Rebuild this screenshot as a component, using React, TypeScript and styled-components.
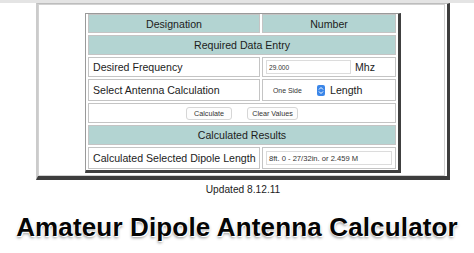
import styled, { createGlobalStyle } from "styled-components";

const Global = createGlobalStyle`
  html, body {
    margin: 0;
    padding: 0;
    background: #ffffff;
    font-family: "Liberation Sans", Arial, sans-serif;
    color: #1c1c1c;
  }
`;

const Page = styled.div`
  width: 474px;
  height: 253px;
  overflow: hidden;
  display: flex;
  flex-direction: column;
`;

const TopBand = styled.div`
  height: 3px;
  background: #e4e4e4;
`;

// outer table with the old 3d border
const Frame = styled.div`
  margin-left: 36px;
  width: 414px;
  box-sizing: border-box;
  border-left: 2px solid #cbcbcb;
  border-top: 1px solid #bdbdbd;
  border-right: 3px solid #3d3d3d;
  border-bottom: 4px solid #3d3d3d;
`;

const FrameCell = styled.div`
  margin-right: 2px;
  border: 1px solid #d2d2d2;
  padding: 8px 0 2px 46px;
`;

const Table = styled.div`
  width: 316px;
  box-sizing: border-box;
  border-left: 1px solid #9a9a9a;
  border-top: 1px solid #9a9a9a;
  border-right: 3px solid #404040;
  border-bottom: 3px solid #404040;
  padding: 0 2px 1px 2px;
  display: grid;
  grid-template-columns: 172px 134px;
  grid-template-rows: 19px 20px 20px 22px 20px 20px 22px;
  gap: 2px;
`;

const Cell = styled.div<{ $head?: boolean; $span?: boolean; $center?: boolean }>`
  grid-column: ${(p) => (p.$span ? "1 / 3" : "auto")};
  box-sizing: border-box;
  border: 1px solid #c4c4c4;
  background: ${(p) => (p.$head ? "#b3d4d2" : "#ffffff")};
  display: flex;
  align-items: center;
  justify-content: ${(p) => (p.$center ? "center" : "flex-start")};
  padding: 0 4px;
  font-size: 10.6px;
  white-space: nowrap;
`;

const ValueCell = styled(Cell)`
  padding: 0 3px;
  gap: 4px;
`;

const Input = styled.div<{ $w: number; $fs?: number }>`
  width: ${(p) => p.$w}px;
  height: 14px;
  box-sizing: border-box;
  border: 1px solid #dcdcdc;
  display: flex;
  align-items: center;
  padding-left: 2px;
  font-size: ${(p) => p.$fs ?? 6.6}px;
  color: #333;
`;

const Unit = styled.span`
  font-size: 10.6px;
`;

const Select = styled.div`
  display: flex;
  align-items: center;
  width: 59px;
  height: 12px;
  font-size: 6.9px;
  color: #333;
  padding-left: 7px;
  box-sizing: border-box;
  justify-content: space-between;
  margin-right: 1px;
`;

const Stepper = styled.span`
  width: 8px;
  height: 11px;
  border-radius: 2px;
  background: #3b86e8;
  display: flex;
  align-items: center;
  justify-content: center;
`;

const Buttons = styled.div`
  display: flex;
  gap: 15px;
`;

const Button = styled.div<{ $w: number }>`
  width: ${(p) => p.$w}px;
  height: 13px;
  box-sizing: border-box;
  border: 1px solid #d6d6d6;
  border-radius: 3px;
  background: #fdfdfd;
  font-size: 7.2px;
  color: #333;
  display: flex;
  align-items: center;
  justify-content: center;
`;

const Updated = styled.div`
  text-align: center;
  font-size: 10.2px;
  margin-top: 4px;
  padding-left: 12px;
`;

const Title = styled.h1`
  margin: 17px 0 0 0;
  text-align: center;
  font-size: 26px;
  letter-spacing: 0.15px;
  line-height: 30px;
  font-weight: bold;
  color: #050505;
  text-shadow: 0 0 2px #fff, 1px 1px 0 #fff, -1px -1px 0 #fff, 0 2px 3px rgba(0, 0, 0, 0.45);
`;

const StepIcon = () => (
  <svg width="6" height="9" viewBox="0 0 6 9">
    <path d="M1 3.5 L3 1.5 L5 3.5" stroke="#fff" strokeWidth="1" fill="none" />
    <path d="M1 5.5 L3 7.5 L5 5.5" stroke="#fff" strokeWidth="1" fill="none" />
  </svg>
);

export default function App() {
  return (
    <Page>
      <Global />
      <TopBand />
      <Frame>
        <FrameCell>
          <Table>
            <Cell $head $center>Designation</Cell>
            <Cell $head $center>Number</Cell>

            <Cell $head $span $center>Required Data Entry</Cell>

            <Cell>Desired Frequency</Cell>
            <ValueCell>
              <Input $w={85}>29.000</Input>
              <Unit>Mhz</Unit>
            </ValueCell>

            <Cell>Select Antenna Calculation</Cell>
            <ValueCell>
              <Select>
                One Side
                <Stepper>
                  <StepIcon />
                </Stepper>
              </Select>
              <Unit>Length</Unit>
            </ValueCell>

            <Cell $span $center>
              <Buttons>
                <Button $w={46}>Calculate</Button>
                <Button $w={51}>Clear Values</Button>
              </Buttons>
            </Cell>

            <Cell $head $span $center>Calculated Results</Cell>

            <Cell>Calculated Selected Dipole Length</Cell>
            <ValueCell>
              <Input $w={126} $fs={7.6}>8ft. 0 - 27/32in. or 2.459 M</Input>
            </ValueCell>
          </Table>
        </FrameCell>
      </Frame>
      <Updated>Updated 8.12.11</Updated>
      <Title>Amateur Dipole Antenna Calculator</Title>
    </Page>
  );
}
